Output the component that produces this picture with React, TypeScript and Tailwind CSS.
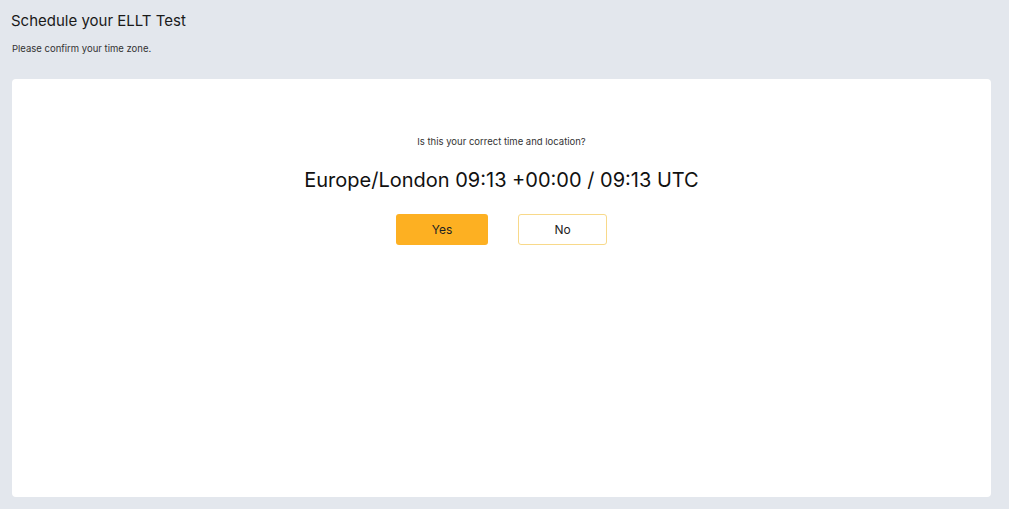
import React from "react";

export default function App() {
  return (
    <div className="w-[1009px] h-[509px] bg-[#e3e7ed] px-3 pt-[11px] pb-3 flex flex-col" style={{ fontFamily: "Inter, 'Noto Sans', sans-serif" }}>
      <h1 className="text-[15px] leading-[20px] text-[#1a1a1a] font-normal -ml-[1px]">Schedule your ELLT Test</h1>
      <p className="text-[9.5px] leading-[12px] text-[#333] mt-[12px]">Please confirm your time zone.</p>
      <div className="mt-[24px] w-[979px] h-[418px] bg-white rounded-[4px] flex flex-col items-center pt-[57px]">
        <p className="text-[9.5px] leading-[12px] text-[#333]">Is this your correct time and location?</p>
        <p className="text-[20px] leading-[24px] text-[#111] mt-[20px]">Europe/London 09:13 +00:00 / 09:13 UTC</p>
        <div className="flex gap-[30px] mt-[22px]">
          <button className="w-[92px] h-[31px] bg-[#fdb022] rounded-[3px] text-[12px] text-[#222]">Yes</button>
          <button className="w-[89px] h-[31px] bg-white border border-[#f8d98a] rounded-[3px] text-[12px] text-[#222]">No</button>
        </div>
      </div>
    </div>
  );
}
